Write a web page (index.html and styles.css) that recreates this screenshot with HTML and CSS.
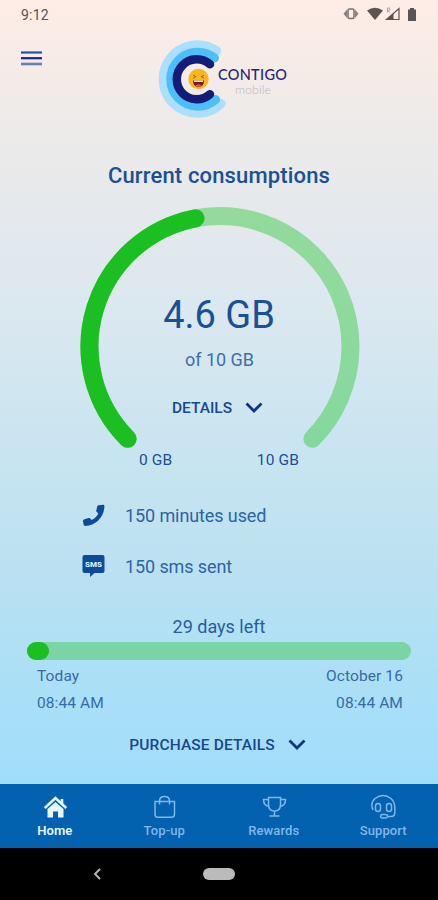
FILE: index.html
```html
<!DOCTYPE html>
<html lang="en">
<head>
<meta charset="utf-8">
<title>Contigo mobile</title>
<link rel="stylesheet" href="styles.css">
</head>
<body>
<div class="phone">
  <div class="status">
    <span class="clock">9:12</span>
    <svg class="status-icons" width="80" height="20" viewBox="0 0 80 20">
      <rect x="5" y="5" width="6" height="9.500" rx="1.500" fill="none" stroke="#77706e" stroke-width="1.500"/>
      <path d="M4 5.500v8.500L.5 9.700zM12 5.500v8.500l3.500-4.300z" fill="#8a827f"/>
      <path d="M24 6.500Q32 1 40 6.500L32 16z" fill="#5b5452"/>
      <path d="M50.500 9.500V15.500h-7z" fill="#5b5452"/>
      <path d="M56 4.500v11H43.500z" fill="none" stroke="#5b5452" stroke-width="1.200"/>
      <path d="M44.500 8.500V4h2.200v2.300h-2.200l2.500 2.200" fill="none" stroke="#b3a9a6"/>
      <path d="M65 5.500h2V4h4v1.500h2V17h-8z" fill="#5b5452"/>
    </svg>
  </div>
  <header class="header">
    <svg class="menu" width="21" height="15" viewBox="0 0 21 15">
      <path d="M0 1.500h21" stroke="#2455a0" stroke-width="2.200"/>
      <path d="M0 7.200h21" stroke="#10298b" stroke-width="2.200"/>
      <path d="M0 13h21" stroke="#6580ac" stroke-width="2.600"/>
    </svg>
    <div class="brand">
      <svg width="70" height="80" viewBox="0 0 70 80">
        <g fill="none" stroke-linecap="round">
          <path d="M58.500 12A34 34 0 1 0 63 64.500" stroke="#acdffb" stroke-width="9.500"/>
          <path d="M56.500 19A27 27 0 1 0 57.500 60.500" stroke="#4cbff9" stroke-width="9"/>
          <path d="M52 25.300A20 20 0 1 0 52 55.300" stroke="#151b78" stroke-width="8.500"/>
        </g>
        <circle cx="40.500" cy="40" r="10.200" fill="#fbb51d"/>
        <path d="M35 41.500h11q0 6.500-5.500 6.500t-5.500-6.500z" fill="#7d1720"/>
        <path d="M36 41.500h9v1.400h-9z" fill="#fff"/>
        <path d="M37.500 46.500q3-2.500 6 0-3 2.500-6 0z" fill="#ef5350"/>
        <path d="m35 36 3 1.600-3 1.400m11-3-3 1.600 3 1.400" fill="none" stroke="#8b5a17" stroke-width=".8"/>
      </svg>
      <div class="wordmark"><span class="name">CONTIGO</span><span class="sub">mobile</span></div>
    </div>
  </header>
  <main class="main">
    <h1 class="title">Current consumptions</h1>
    <section class="gauge">
      <svg class="ring" width="280" height="246" viewBox="0 0 280 246">
        <g fill="none" stroke-width="18" stroke-linecap="round">
          <path d="M47.700 231.800A130.500 130.500 0 1 1 232.300 231.800" stroke="#3acb43" stroke-opacity=".48"/>
          <path d="M47.700 231.800A130.500 130.500 0 0 1 115.500 11.300" stroke="#1bbf22"/>
        </g>
      </svg>
      <div class="reading">
        <div class="amount">4.6 GB</div>
        <div class="total">of 10 GB</div>
        <div class="toggle"><span class="details">DETAILS</span>
          <svg width="18" height="12" viewBox="0 0 18 12"><path d="m1.500 1.500 7.500 7.500 7.500-7.500" fill="none" stroke="#0d3585" stroke-width="2.800"/></svg>
        </div>
      </div>
    </section>
    <div class="scale"><span>0 GB</span><span>10 GB</span></div>
    <section class="usage">
      <div class="row">
        <svg width="24" height="24" viewBox="0 0 24 24"><path d="M17.700 1.200 22 .8c1 0 1.400.6 1.400 1.500C23.200 13.500 14.500 21.500 4.200 22c-.9 0-1.500-.5-1.600-1.400L2 17.200c-.1-.8.2-1.300.9-1.600l4.600-1.500c.7-.3 1.300-.1 1.700.5l1.500 1.500c3-1.600 5.400-3.700 6.600-6.500l-1.500-1.500c-.6-.4-.7-1-.5-1.600l1-4.400c.3-.6.700-.9 1.400-.9z" fill="#0b4b9a"/></svg>
        <span class="minutes">150 minutes used</span>
      </div>
      <div class="row">
        <svg width="24" height="24" viewBox="0 0 24 24"><path d="M3.500 0h18Q23.500 0 23.500 2v14q0 2-2 2H13.500L9 22v-4H3.500q-2 0-2-2V2q0-2 2-2z" fill="#0b4b9a"/><text x="12.500" y="12" class="sms" textLength="17" lengthAdjust="spacingAndGlyphs">SMS</text></svg>
        <span class="sent">150 sms sent</span>
      </div>
    </section>
    <section class="period">
      <div class="left">29 days left</div>
      <div class="bar"><div class="fill"></div></div>
      <div class="dates"><span class="today">Today</span><span class="end">October 16</span></div>
      <div class="dates times"><span>08:44 AM</span><span>08:44 AM</span></div>
    </section>
    <div class="toggle purchase"><span>PURCHASE DETAILS</span>
      <svg width="18" height="12" viewBox="0 0 18 12"><path d="m1.500 1.500 7.500 7.500 7.500-7.500" fill="none" stroke="#0d3585" stroke-width="2.800"/></svg>
    </div>
  </main>
  <nav class="tabs">
    <div class="tab active">
      <svg width="26" height="26" viewBox="0 0 26 26"><path d="m13.500 8 8 7v8.500h-5.500v-6h-5v6H5.500V15z" fill="#e9f5ff"/><path d="M2.800 14 13.500 4l10.700 10M20 5v5" fill="none" stroke="#e9f5ff" stroke-width="2.600"/></svg>
      <span>Home</span>
    </div>
    <div class="tab">
      <svg width="26" height="26" viewBox="0 0 26 26"><path d="M4 7.500h19.500v12.800q0 3-3 3H6.500q-2.500 0-2.500-3zM8.500 10.500V7.200q0-4.700 5-4.700t5 4.700v3.300" fill="none" stroke="#80b7ea" stroke-width="1.500"/></svg>
      <span>Top-up</span>
    </div>
    <div class="tab">
      <svg width="26" height="26" viewBox="0 0 26 26"><path d="M7.500 3.500h12v7q0 6.500-6 6.500t-6-6.500zM7.500 5.500H2.500q0 6.500 6 7M19.500 5.500h5q0 6.500-6 7M13.500 17v4.500M8.500 22h10" fill="none" stroke="#80b7ea" stroke-width="1.500"/></svg>
      <span>Rewards</span>
    </div>
    <div class="tab">
      <svg width="26" height="26" viewBox="0 0 26 26"><g fill="none" stroke="#80b7ea" stroke-width="1.500"><path d="M3 16Q0 9 5 4.500q8-6 16 0 3.800 3.500 3.800 9V19q0 3.500-3.800 3.500h-3"/><rect x="5.500" y="9.500" width="5" height="8" rx="2.500"/><rect x="16.500" y="9.500" width="5" height="8" rx="2.500"/><rect x="10.500" y="20.500" width="7" height="3.500" rx="1.700"/></g></svg>
      <span>Support</span>
    </div>
  </nav>
  <div class="system">
    <svg width="10" height="14" viewBox="0 0 10 14"><path d="M8 2 3 7l5 5" fill="none" stroke="#b5b5b5" stroke-width="2"/></svg>
    <div class="pill"></div>
  </div>
</div>
</body>
</html>
```
FILE: styles.css
```css
* { box-sizing: border-box; }
body { margin: 0; font-family: Roboto, "Liberation Sans", sans-serif; color: #1b4f96; }
.phone {
  width: 438px; height: 900px; display: flex; flex-direction: column; overflow: hidden;
  background: linear-gradient(#feede5 0, #fbece6 30px, #eeebe9 115px, #e7e9eb 190px, #dae8f0 320px, #cbe5f0 430px, #bce1f1 560px, #aadff7 690px, #a1ddfb 784px);
}
.status { height: 30px; padding: 4px 15px 0 21px; display: flex; justify-content: space-between; }
.clock { font-size: 14px; line-height: 22px; color: #5b5452; letter-spacing: .2px; }
.header { height: 110px; padding: 10px 0 0 21px; display: flex; align-items: flex-start; }
.menu { margin-top: 11px; }
.brand { display: flex; margin-left: 116px; margin-top: -1px; }
.wordmark { display: flex; flex-direction: column; margin-left: -10px; padding-top: 28px; }
.name { font: 500 14.500px/16px Lato, sans-serif; color: #25247c; letter-spacing: .3px; }
.sub { font: 300 12.500px/11px Lato, sans-serif; color: #b9b7c6; margin: 1px 0 0 17px; }
.main { height: 644px; display: flex; flex-direction: column; }
.title { margin: 21px 0 0; height: 30px; text-align: center; font-size: 22px; line-height: 30px; font-weight: 500; letter-spacing: .15px; }
.gauge { display: grid; justify-content: center; margin-top: 16px; height: 244px; }
.ring, .reading { grid-area: 1 / 1; }
.ring { margin: 0 -1px 0 0; }
.reading { display: flex; flex-direction: column; align-items: center; padding-top: 85px; }
.amount { font-size: 38px; line-height: 46px; }
.total { font-size: 18px; line-height: 24px; margin: 10px 0 0 1px; color: #3f6da8; }
.toggle { display: flex; align-items: center; justify-content: center; gap: 13px; color: #194690; font-size: 15.500px; line-height: 20px; font-weight: 500; }
.reading .toggle { margin: 26px 3px 0 0; }
.scale { display: flex; justify-content: space-between; padding: 0 139px 0 139px; margin-top: -1px; font-size: 15.500px; line-height: 20px; letter-spacing: .15px; }
.usage { display: flex; flex-direction: column; gap: 27px; padding: 34px 0 0 81px; }
.row { display: flex; align-items: center; gap: 20px; height: 24px; font-size: 18px; line-height: 24px; color: #2d64a7; letter-spacing: -.1px; }
.sms { font: 900 7.500px Roboto, sans-serif; fill: #d8efff; text-anchor: middle; letter-spacing: 0; }
.period { padding: 36px 27px 0; }
.left { text-align: center; font-size: 18px; line-height: 24px; color: #285d9e; }
.bar { height: 18px; border-radius: 9px; background: #7ad4a5; margin-top: 3px; }
.fill { width: 22px; height: 18px; border-radius: 9px; background: #1bbf22; }
.dates { display: flex; justify-content: space-between; padding: 0 8px 0 10px; font-size: 15.500px; line-height: 20px; margin-top: 6px; color: #376ba5; letter-spacing: .1px; }
.times { margin-top: 7px; }
.purchase { margin-top: 22px; padding-right: 3px; letter-spacing: .12px; }
.tabs { height: 64px; background: #0262af; display: grid; grid-template-columns: repeat(4, 1fr); }
.tab { display: flex; flex-direction: column; align-items: center; padding-top: 10px; font-size: 13px; line-height: 16px; font-weight: 500; color: #80b7ea; gap: 3px; letter-spacing: .1px; }
.active { color: #e9f5ff; font-weight: 600; }
.system { flex: 1; background: #000; display: flex; align-items: center; padding: 0 0 0 92px; }
.pill { width: 32px; height: 12px; border-radius: 6px; background: #bbb; margin-left: 101px; }
```
